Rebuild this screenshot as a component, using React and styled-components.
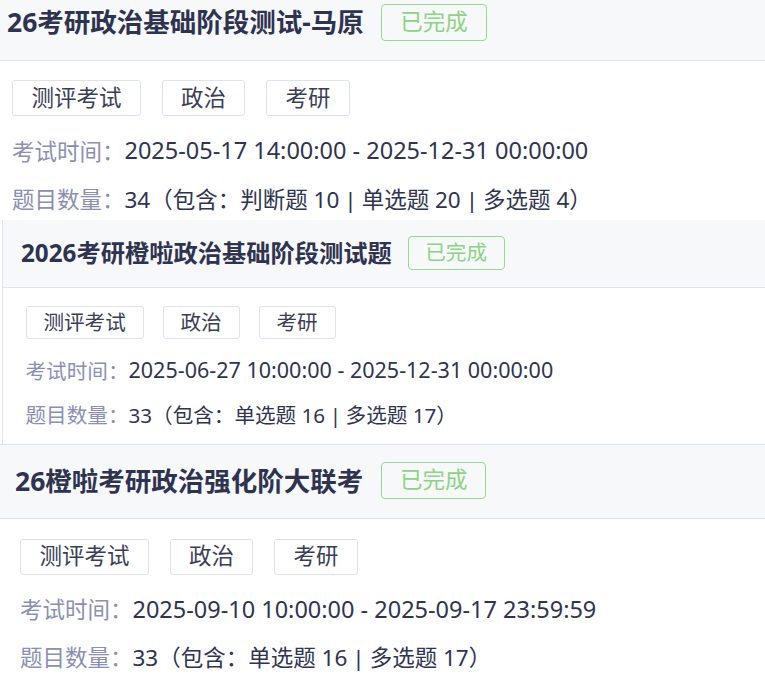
import styled, { createGlobalStyle } from 'styled-components'

const exams = [
  {
    id: 'mayuan',
    title: '26考研政治基础阶段测试-马原',
    tags: ['测评考试', '政治', '考研'],
    start: '2025-05-17 14:00:00',
    end: '2025-12-31 00:00:00',
    total: 34,
    parts: [['判断题', 10], ['单选题', 20], ['多选题', 4]],
    size: 22.5,
    inset: 7,
    tail: 5,
  },
  {
    id: 'jichu',
    title: '2026考研橙啦政治基础阶段测试题',
    tags: ['测评考试', '政治', '考研'],
    start: '2025-06-27 10:00:00',
    end: '2025-12-31 00:00:00',
    total: 33,
    parts: [['单选题', 16], ['多选题', 17]],
    size: 20.6,
    inset: 18,
    tail: 15,
    framed: true,
  },
  {
    id: 'liankao',
    title: '26橙啦考研政治强化阶大联考',
    tags: ['测评考试', '政治', '考研'],
    start: '2025-09-10 10:00:00',
    end: '2025-09-17 23:59:59',
    total: 33,
    parts: [['单选题', 16], ['多选题', 17]],
    size: 22.5,
    inset: 15,
    tail: 10,
    ruled: true,
  },
]

const GlobalStyle = createGlobalStyle`
  html, body {
    margin: 0;
    padding: 0;
    background: #ffffff;
    overflow: hidden;
  }
  body {
    font-family: "Noto Sans", "Noto Sans CJK SC", sans-serif;
    color: #2f3450;
  }
`

const Page = styled.div`
  display: flex;
  flex-direction: column;
  margin-top: -13px;
`

const Card = styled.section`
  font-size: ${(p) => p.$size}px;
  margin-left: ${(p) => (p.$framed ? '2px' : '0')};
  border-left: ${(p) => (p.$framed ? '1px solid #dfe3ec' : 'none')};
  border-top: ${(p) => (p.$ruled ? '1px solid #dfe3ec' : 'none')};
  background: #ffffff;
`

const CardHeader = styled.div`
  display: flex;
  align-items: center;
  gap: 0.78em;
  padding: 0.76em 0 0.84em ${(p) => p.$inset}px;
  background: #f7f8fa;
  border-bottom: 1px solid #dfe3ec;
`

const Title = styled.h2`
  margin: 0;
  font-size: 1.178em;
  line-height: 1.3;
  font-weight: 700;
  color: #2e3350;
  white-space: nowrap;
`

const StatusBadge = styled.span`
  box-sizing: border-box;
  display: inline-flex;
  align-items: center;
  height: 1.64em;
  padding: 0 0.8em;
  border: 1.5px solid #95db8f;
  border-radius: 4px;
  color: #8cd484;
  line-height: 1;
  white-space: nowrap;
`

const CardBody = styled.div`
  display: flex;
  flex-direction: column;
  padding: 0.87em 0 ${(p) => p.$tail}px calc(${(p) => p.$inset}px + 0.22em);
`

const TagRow = styled.ul`
  display: flex;
  gap: 0.92em;
  margin: 0 0 0.76em;
  padding: 0;
  list-style: none;
`

const Tag = styled.li`
  box-sizing: border-box;
  display: flex;
  align-items: center;
  height: 1.6em;
  padding: 0 0.82em;
  border: 1.5px solid #dde2ec;
  border-radius: 3px;
  color: #393e56;
  line-height: 1;
`

const InfoList = styled.div`
  display: flex;
  flex-direction: column;
  gap: 0.63em;
`

const InfoRow = styled.div`
  display: flex;
  align-items: center;
  height: 1.5em;
  white-space: nowrap;
`

const Label = styled.span`
  color: #8a8fb3;
`

const Value = styled.span`
  color: #2f3450;
`

const TimeValue = styled(Value)`
  font-size: 1.045em;
`

const Sep = styled.span`
  margin: 0 0.22em;
`

function Breakdown({ total, parts }) {
  return (
    <Value>
      {total}（包含：
      {parts.map(([name, n], i) => (
        <span key={name}>
          {i > 0 && <Sep>|</Sep>}
          {name} {n}
        </span>
      ))}
      ）
    </Value>
  )
}

function ExamCard({ exam }) {
  return (
    <Card $size={exam.size} $framed={exam.framed} $ruled={exam.ruled}>
      <CardHeader $inset={exam.inset}>
        <Title>{exam.title}</Title>
        <StatusBadge>已完成</StatusBadge>
      </CardHeader>
      <CardBody $inset={exam.inset} $tail={exam.tail}>
        <TagRow>
          {exam.tags.map((tag) => (
            <Tag key={tag}>{tag}</Tag>
          ))}
        </TagRow>
        <InfoList>
          <InfoRow>
            <Label>考试时间：</Label>
            <TimeValue>
              {exam.start} - {exam.end}
            </TimeValue>
          </InfoRow>
          <InfoRow>
            <Label>题目数量：</Label>
            <Breakdown total={exam.total} parts={exam.parts} />
          </InfoRow>
        </InfoList>
      </CardBody>
    </Card>
  )
}

export default function App() {
  return (
    <>
      <GlobalStyle />
      <Page>
        {exams.map((exam) => (
          <ExamCard key={exam.id} exam={exam} />
        ))}
      </Page>
    </>
  )
}
